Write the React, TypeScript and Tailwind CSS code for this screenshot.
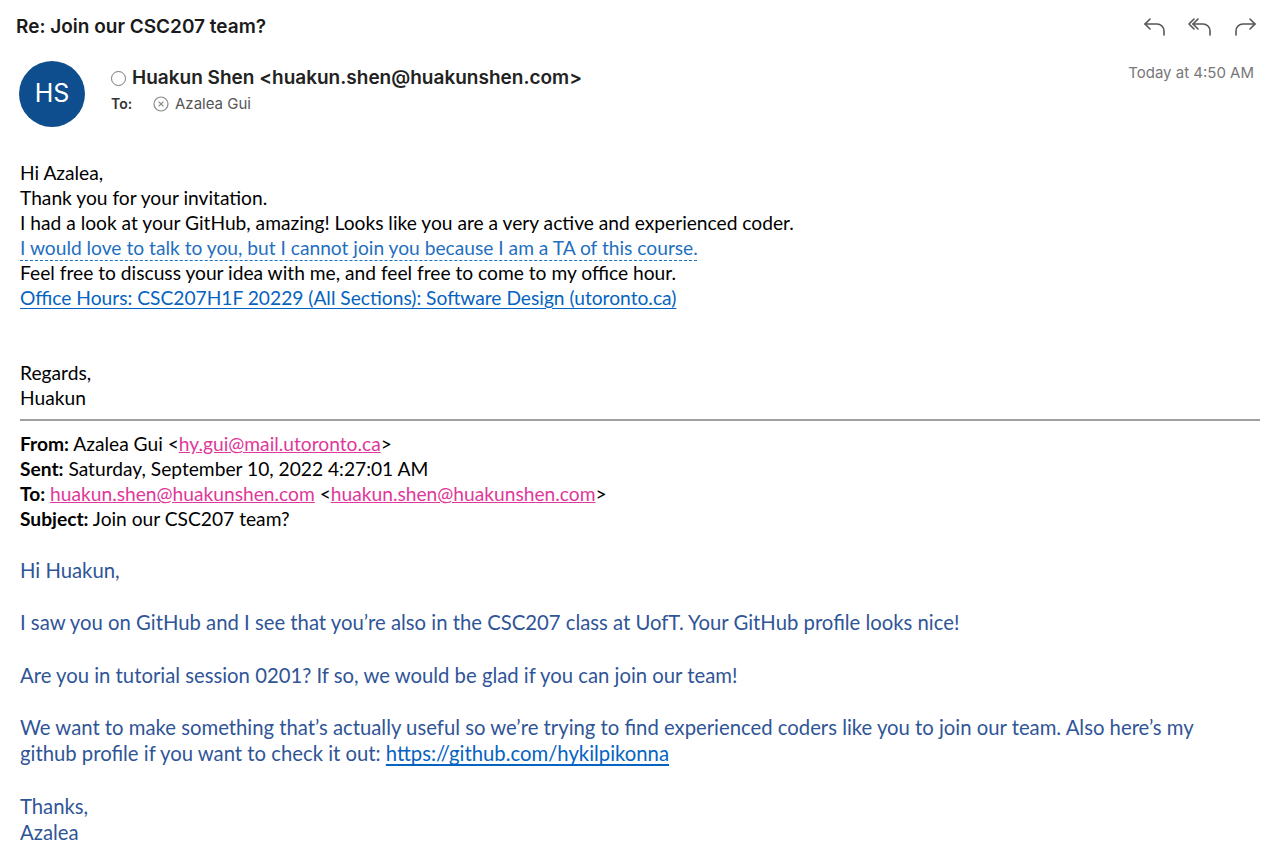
import React from "react";

const body = { fontFamily: "Lato, 'Open Sans', sans-serif" } as React.CSSProperties;
const ui = { fontFamily: "Inter, 'Liberation Sans', sans-serif" } as React.CSSProperties;

function ReplyIcon() {
  return (
    <svg width="26" height="22" viewBox="0 0 26 22" fill="none" stroke="#555" strokeWidth="1.6" strokeLinecap="round" strokeLinejoin="round">
      <path d="M8 3 L3 8 L8 13" />
      <path d="M3 8 H15 A7 7 0 0 1 22 15 V19" />
    </svg>
  );
}
function ReplyAllIcon() {
  return (
    <svg width="28" height="22" viewBox="0 0 28 22" fill="none" stroke="#555" strokeWidth="1.6" strokeLinecap="round" strokeLinejoin="round">
      <path d="M8 3 L3 8 L8 13" />
      <path d="M12 3 L7 8 L12 13" />
      <path d="M7 8 H17 A7 7 0 0 1 24 15 V19" />
    </svg>
  );
}
function ForwardIcon() {
  return (
    <svg width="26" height="22" viewBox="0 0 26 22" fill="none" stroke="#555" strokeWidth="1.6" strokeLinecap="round" strokeLinejoin="round">
      <path d="M18 3 L23 8 L18 13" />
      <path d="M23 8 H11 A7 7 0 0 0 4 15 V19" />
    </svg>
  );
}

export default function App() {
  return (
    <div className="w-[1280px] h-[867px] bg-white overflow-hidden relative">
      <div className="flex items-center justify-between pl-[16px] pr-[22px] pt-[15px]" style={ui}>
        <div className="text-[19px] font-semibold text-[#1a1a1a] leading-[24px]">Re: Join our CSC207 team?</div>
        <div className="flex items-center gap-[18px]">
          <ReplyIcon />
          <ReplyAllIcon />
          <ForwardIcon />
        </div>
      </div>

      <div className="flex items-start pl-[19px] pr-[26px] pt-[22px]" style={ui}>
        <div className="w-[66px] h-[66px] rounded-full bg-[#0f4e8e] flex items-center justify-center text-white text-[25px] shrink-0">
          HS
        </div>
        <div className="flex-1 pl-[26px] pt-[5px]">
          <div className="flex items-center">
            <span className="w-[15px] h-[15px] rounded-full border-[1.5px] border-[#777] mr-[6px] inline-block" />
            <span className="text-[19px] font-semibold text-[#222] leading-[24px]">Huakun Shen &lt;huakun.shen@huakunshen.com&gt;</span>
          </div>
          <div className="flex items-center mt-[4px] text-[15px] leading-[20px]">
            <span className="font-semibold text-[#333] w-[42px] text-[14px]">To:</span>
            <svg width="16" height="16" viewBox="0 0 16 16" fill="none" stroke="#888" strokeWidth="1.2" className="mr-[6px]">
              <circle cx="8" cy="8" r="7" />
              <path d="M5.6 5.6 L10.4 10.4 M10.4 5.6 L5.6 10.4" />
            </svg>
            <span className="text-[#555]">Azalea Gui</span>
          </div>
        </div>
        <div className="text-[15px] text-[#777] pt-[1px]">Today at 4:50 AM</div>
      </div>

      <div className="pl-[20px] pr-[20px] pt-[33px] text-[19.2px] leading-[25px] text-black" style={body}>
        <div>Hi Azalea,</div>
        <div>Thank you for your invitation.</div>
        <div>I had a look at your GitHub, amazing! Looks like you are a very active and experienced coder.</div>
        <div>
          <span className="text-[#1f6fbf] underline decoration-dashed decoration-[#1f6fbf] underline-offset-[5px] decoration-1">
            I would love to talk to you, but I cannot join you because I am a TA of this course.
          </span>
        </div>
        <div>Feel free to discuss your idea with me, and feel free to come to my office hour.</div>
        <div>
          <span className="text-[#0563c1] underline underline-offset-[3px]">
            Office Hours: CSC207H1F 20229 (All Sections): Software Design (utoronto.ca)
          </span>
        </div>
        <div className="h-[25px]" />
        <div className="h-[25px]" />
        <div>Regards,</div>
        <div>Huakun</div>
        <div className="border-t-2 border-[#a0a0a0] mt-[9px] mb-[10px]" />
        <div><span className="font-bold">From:</span> Azalea Gui &lt;<span className="text-[#e0389a] underline">hy.gui@mail.utoronto.ca</span>&gt;</div>
        <div><span className="font-bold">Sent:</span> Saturday, September 10, 2022 4:27:01 AM</div>
        <div>
          <span className="font-bold">To:</span> <span className="text-[#e0389a] underline">huakun.shen@huakunshen.com</span> &lt;<span className="text-[#e0389a] underline">huakun.shen@huakunshen.com</span>&gt;
        </div>
        <div><span className="font-bold">Subject:</span> Join our CSC207 team?</div>

        <div className="text-[#2f5597] text-[20.3px] leading-[26.2px] mt-[26px]">
          <div>Hi Huakun,</div>
          <div className="h-[26.2px]" />
          <div>I saw you on GitHub and I see that you’re also in the CSC207 class at UofT. Your GitHub profile looks nice!</div>
          <div className="h-[26.2px]" />
          <div>Are you in tutorial session 0201? If so, we would be glad if you can join our team!</div>
          <div className="h-[26.2px]" />
          <div className="max-w-[1205px]">
            We want to make something that’s actually useful so we’re trying to find experienced coders like you to join our team. Also here’s my github profile if you want to check it out:{" "}
            <span className="text-[#0563c1] underline underline-offset-[3px]">https://github.com/hykilpikonna</span>
          </div>
          <div className="h-[26.2px]" />
          <div>Thanks,</div>
          <div>Azalea</div>
        </div>
      </div>
    </div>
  );
}
